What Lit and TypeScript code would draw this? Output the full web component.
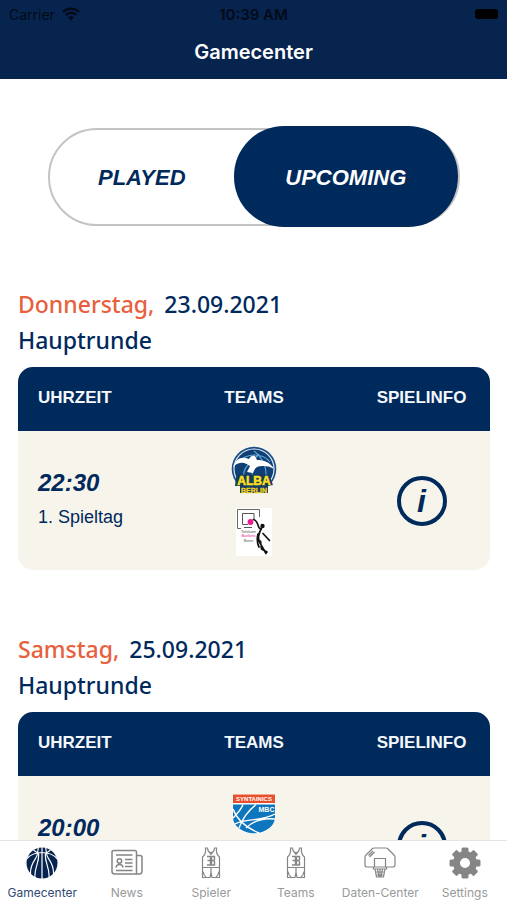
import { LitElement, html, css, svg } from "lit";
import { customElement, property, state } from "lit/decorators.js";
import { classMap } from "lit/directives/class-map.js";

interface Game {
  day: string;
  date: string;
  round: string;
  time: string;
  matchday: string;
  teams: string[];
}

const games: Game[] = [
  { day: "Donnerstag,", date: "23.09.2021", round: "Hauptrunde", time: "22:30", matchday: "1. Spieltag", teams: ["alba", "bonn"] },
  { day: "Samstag,", date: "25.09.2021", round: "Hauptrunde", time: "20:00", matchday: "1. Spieltag", teams: ["mbc", "alba"] },
];

const logos: Record<string, unknown> = {
  alba: html`<svg viewBox="0 0 48 48" width="48" height="48" role="img" aria-label="ALBA Berlin">
    <circle cx="24" cy="23" r="22.3" fill="#1c4f86" />
    <circle cx="24" cy="23" r="20.6" fill="#d9eaf5" />
    <circle cx="24" cy="23" r="19.4" fill="#0f3f74" />
    <path d="M8 17C15 7 32 6 40 16M14 36C12 28 15 20 23 14M24 5C34 13 38 24 35 35M29 8C22 14 21 25 23 32" fill="none" stroke="#5fa6d3" stroke-width="1.1" />
    <path d="M3 21C6 13 11 10 19 13C20 10 23 9 25 10L27 14C34 14 40 16 44 23C37 19 31 20 27 21C25 22 24 25 23 27L17 26L20 20C15 16 9 15 3 21Z" fill="#fff" />
    <path d="M6 31L9 28.500H39L43 39L38 40V47H10V40H5Z" fill="#163c5f" />
    <text x="24" y="39" text-anchor="middle" class="lg" font-size="12" fill="#ffe01a" stroke="#ffe01a" stroke-width="0.500">ALBA</text>
    <text x="24" y="46.500" text-anchor="middle" class="lg" font-size="7" fill="#f3d321" stroke="#f3d321" stroke-width="0.300">BERLIN</text>
  </svg>`,
  bonn: html`<svg viewBox="0 0 36 48" width="36" height="48" role="img" aria-label="Telekom Baskets Bonn">
    <rect width="36" height="48" fill="#fff" />
    <path d="M5 20.500H1.500V1.500H23.500V9" fill="none" stroke="#666" stroke-width="1" />
    <path d="M12 16.500H6.500V5.500H18V11M8 19.500H16" fill="none" stroke="#555" stroke-width="1" />
    <circle cx="14.500" cy="14" r="2.900" fill="#ed1c92" />
    <g class="tiny" text-anchor="middle" font-size="4">
      <text x="12.500" y="24.500" fill="#555">Telekom</text>
      <text x="12.500" y="29" fill="#ed1c92">Baskets</text>
      <text x="12.500" y="33.500" fill="#555">Bonn</text>
    </g>
    <circle cx="26.500" cy="18" r="2.200" fill="#111" />
    <path d="M17.500 11.500C19.500 12 21.500 15 22.500 18.500C23 20 24 21 25.500 20.500C22.500 25 21.500 31 24 35L30 45.500M24.500 33L25.500 41L31 44M22 26C21 30 21 35 23 39M27 25.500L33.500 32.500" fill="none" stroke="#111" stroke-width="1.700" stroke-linecap="round" stroke-linejoin="round" />
  </svg>`,
  mbc: html`<svg viewBox="0 0 44 48" width="44" height="48" role="img" aria-label="Syntainics MBC">
    <path d="M.5 3H43.500V26C43.500 36 33 42.800 22 43C11 42.800.5 36 .5 26Z" fill="#fff" />
    <path d="M1 13.500H43V26C43 35.500 33 42 22 42.300C11 42 1 35.500 1 26Z" fill="#0e76bc" />
    <path d="M1 27C5 23 9 19 11 13.500M1 18C5 29 15 37 27 42M7 37C11 26 17 19 24 13.500M3 33C14 27 28 31 43 23M14 37C22 29 33 27 43 28" fill="none" stroke="#fff" stroke-width="1.400" />
    <path d="M25 14H43V22H27Z" fill="#0e76bc" />
    <rect x="1" y="3.500" width="42" height="8.500" fill="#e8502b" />
    <text x="22" y="10.200" text-anchor="middle" class="lg" font-size="6" fill="#fff">SYNTAINICS</text>
    <text x="34.500" y="20.500" text-anchor="middle" class="lg" font-size="7" fill="#fff">MBC</text>
  </svg>`,
};

const jersey = html`<svg viewBox="0 0 32 32" width="32" height="32" fill="none" stroke="currentColor" stroke-width="1.200" aria-hidden="true">
  <path d="M10.500 1C11 5 10 8 7.500 10V30.500H15L16 25L17 30.500H24.500V10C22 8 21 5 21.500 1H19.500C19 4 18 5.500 16 5.500S13 4 12.500 1ZM7.500 20.500H24.500M16 20.500V25M8 24.500C8.500 27 9.500 29 11 30M24 24.500C23.500 27 22.500 29 21 30M12.500 3L16 7.500L19.500 3" />
  <path d="M12 9.500H15.500V18H12M12.500 13.500H15.500M16.500 9.500H19.500V12.500L18.500 13.500L19.500 14.500V18H16.500V9.500M16.500 13.500H19" stroke-width="1.400" />
</svg>`;

const tooth = (a: number) => svg`<rect x="12.500" y="0.500" width="7" height="8" rx="1.500" transform="rotate(${a} 16 16)" />`;

const icons: Record<string, unknown> = {
  ball: html`<svg viewBox="0 0 32 32" width="32" height="32" aria-hidden="true">
    <circle cx="16" cy="16" r="15.500" fill="currentColor" />
    <path d="M16 0V32M.5 12C4 8 10 5.500 16 5.500S28 8 31.500 12M11.500 6C12 12 4 14 4.500 27M20.500 6C20 12 28 14 27.500 27M12.500 6C14 15 8 20 9 31M19.500 6C18 15 24 20 23 31M7.500 3L11.500 6L12.500 0M24.500 3L20.500 6L19.500 0" fill="none" stroke="#fff" stroke-width="1.200" />
  </svg>`,
  news: html`<svg viewBox="0 0 32 32" width="32" height="32" fill="none" stroke="currentColor" stroke-width="1.500" aria-hidden="true">
    <path d="M25.500 27H4C2 27 1 26 1 24.500V5C1 4 2 3.500 3 3.500H24C25 3.500 25.500 4 25.500 5.500ZM25.500 8.500H29C30.500 8.500 31 9 31 10.500V24C31 26 30 27 28.500 27H25.500M5 8H21.500M14 12.500H21.500M14 16H21.500M14 19.500H21.500M5 23.500H21.500" />
    <circle cx="8.500" cy="14" r="2.200" /><path d="M5 20.500C5.500 16.500 11.500 16.500 12 20.500" />
  </svg>`,
  jersey,
  hoop: html`<svg viewBox="0 0 32 32" width="32" height="32" fill="none" stroke="currentColor" stroke-width="1.200" aria-hidden="true">
    <path d="M10.500 20H3C1.500 20 1 19 1 17.500V10C1 9 1.500 8.500 2.500 7.500L8 2C8.500 1.500 9 1 10 1H22C23 1 23.500 1.500 24 2L29.500 7.500C30.500 8.500 31 9 31 10V17.500C31 19 30.500 20 29 20H21.500M10.500 20V11.500H21.500V20M4.500 8.500L9 4M5.500 10L10.500 5M9.500 20H22.500V22H9.500ZM11 22L12.500 30H19.500L21 22M13.500 22L15 30M18.500 22L17 30M16 22V30M12 25H20M12.500 28H19.500" />
  </svg>`,
  gear: html`<svg viewBox="0 0 32 32" width="32" height="32" fill="currentColor" aria-hidden="true">
    ${[0, 45, 90, 135, 180, 225, 270, 315].map(tooth)}
    <circle cx="16" cy="16" r="8.500" fill="none" stroke="currentColor" stroke-width="7" />
  </svg>`,
};

const font = css`"Inter", "Liberation Sans", sans-serif`;
const face = css`"Liberation Sans", Arial, sans-serif`;

@customElement("game-card")
class GameCard extends LitElement {
  @property({ attribute: false }) game!: Game;

  static styles = css`
    :host { display: block; font-family: ${face}; color: #00295c; }
    h2 { margin: 0 0 9px; font: 500 23px/36px "Noto Sans", ${face}; }
    .line { display: flex; gap: 10px; }
    .day { color: #e8603c; }
    table { width: 100%; table-layout: fixed; border-collapse: collapse; border-radius: 15px; overflow: hidden; background: #f7f4ec; }
    th { height: 64px; padding: 0 0 3px; box-sizing: border-box; background: #00295c; color: #f4f7fb; font-size: 17px; line-height: 24px; font-weight: 700; }
    .side { width: 29%; }
    td { height: 139px; padding: 0; text-align: center; vertical-align: middle; }
    .first { padding-left: 20px; padding-bottom: 2px; text-align: left; box-sizing: border-box; }
    .time { display: block; font-size: 24px; line-height: 34px; font-weight: 700; font-style: italic; }
    .matchday { display: block; font-size: 18px; line-height: 34px; }
    .logos { display: flex; flex-direction: column; align-items: center; gap: 14px; }
    .logos svg { display: block; }
    .lg { font-family: ${face}; font-weight: 700; }
    .tiny { font-family: ${face}; }
    .info { width: 50px; height: 50px; padding: 0; border: 4px solid #00295c; border-radius: 50%; background: none; color: inherit; font: italic 700 32px/40px ${face}; vertical-align: middle; }
  `;

  render() {
    const g = this.game;
    return html`
      <h2>
        <span class="line"><span class="day">${g.day}</span><span>${g.date}</span></span>
        <span class="line">${g.round}</span>
      </h2>
      <table>
        <thead>
          <tr><th class="side first">UHRZEIT</th><th>TEAMS</th><th class="side">SPIELINFO</th></tr>
        </thead>
        <tbody>
          <tr>
            <td class="first"><span class="time">${g.time}</span><span class="matchday">${g.matchday}</span></td>
            <td><div class="logos">${g.teams.map((t) => logos[t])}</div></td>
            <td><button class="info" aria-label="Spielinfo">i</button></td>
          </tr>
        </tbody>
      </table>
    `;
  }
}

@customElement("app-root")
class AppRoot extends LitElement {
  @state() private mode = "UPCOMING";
  @state() private tab = "Gamecenter";

  static styles = css`
    :host { display: flex; flex-direction: column; height: 100vh; background: #fff; font-family: ${font}; }
    header { flex: none; background: #07244f; padding-bottom: 9px; }
    .status { display: grid; grid-template-columns: 1fr auto 1fr; align-items: center; height: 28px; padding: 0 9px; font-size: 14px; color: #020a18; }
    .carrier { display: flex; align-items: center; gap: 7px; }
    .clock { font-size: 15px; font-weight: 600; }
    .battery { justify-self: end; width: 23px; height: 10px; border-radius: 3px; background: #000; }
    h1 { margin: 0; padding-top: 6px; font-size: 20px; line-height: 36px; font-weight: 600; text-align: center; color: #fff; }
    main { flex: 1; min-height: 0; overflow-y: auto; scrollbar-width: none; padding: 49px 17px 0 18px; }
    .toggle { display: flex; height: 98px; box-sizing: border-box; margin: 0 30px 60px; border: 2px solid #c4c4c4; border-radius: 50px; }
    .toggle button { flex: 9; padding: 2px 0 0; border: 0; border-radius: 50px; background: none; color: #00295c; font: italic 700 22px/28px ${face}; }
    .toggle .on { flex: 11; margin: -4px 0 -3px; background: #00295c; color: #fff; }
    game-card { margin-bottom: 61px; }
    nav { flex: none; display: grid; grid-template-columns: repeat(6, 1fr); height: 60px; box-sizing: border-box; border-top: 1px solid #e4e4e4; background: #fff; }
    nav button { display: flex; flex-direction: column; align-items: center; gap: 6px; padding: 6px 0 0; border: 0; background: none; color: #858585; font: 400 12px/16px ${font}; white-space: nowrap; }
    nav .active { color: #07244f; }
    nav svg { flex: none; }
    nav span { color: #999; }
    nav .active span { color: #2f4a75; }
  `;

  private tabs = [
    ["Gamecenter", "ball"], ["News", "news"], ["Spieler", "jersey"],
    ["Teams", "jersey"], ["Daten-Center", "hoop"], ["Settings", "gear"],
  ];

  render() {
    return html`
      <header>
        <div class="status">
          <span class="carrier">Carrier
            <svg viewBox="0 0 18 14" width="18" height="14" aria-hidden="true">
              <path d="M9 13.500L6 10.200C7.700 8.800 10.300 8.800 12 10.200Z" fill="currentColor" />
              <path d="M1 5C5.500 .5 12.500 .5 17 5M3.800 8C6.700 5 11.300 5 14.200 8" fill="none" stroke="currentColor" stroke-width="2.300" />
            </svg>
          </span>
          <span class="clock">10:39 AM</span>
          <span class="battery"></span>
        </div>
        <h1>Gamecenter</h1>
      </header>
      <main>
        <div class="toggle">
          ${["PLAYED", "UPCOMING"].map((m) => html`<button class=${classMap({ on: this.mode === m })} aria-pressed=${this.mode === m} @click=${() => (this.mode = m)}>${m}</button>`)}
        </div>
        ${games.map((g) => html`<game-card .game=${g}></game-card>`)}
      </main>
      <nav>
        ${this.tabs.map(([label, icon]) => html`<button class=${classMap({ active: this.tab === label })} @click=${() => (this.tab = label)}>${icons[icon]}<span>${label}</span></button>`)}
      </nav>
    `;
  }
}
